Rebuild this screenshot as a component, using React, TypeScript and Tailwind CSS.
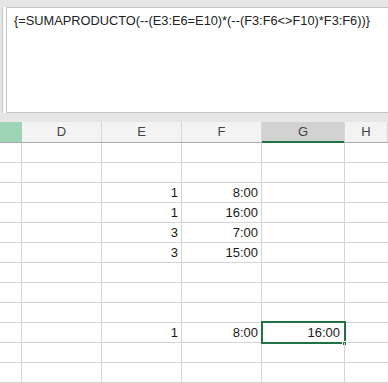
const cols = ["C", "D", "E", "F", "G", "H"];

type Row = { e?: string; f?: string; g?: string; sel?: boolean };

const rows: Row[] = [
  {},
  {},
  { e: "1", f: "8:00" },
  { e: "1", f: "16:00" },
  { e: "3", f: "7:00" },
  { e: "3", f: "15:00" },
  {},
  {},
  {},
  { e: "1", f: "8:00", g: "16:00", sel: true },
  {},
  {},
];

const grid = "grid grid-cols-[22px_80px_80px_80px_83px_1fr]";

export default function App() {
  return (
    <div className="h-[383px] w-[388px] overflow-hidden bg-white font-['Liberation_Sans',Arial,sans-serif] text-[#1a1a1a]">
      {/* formula bar */}
      <div className="flex h-[122px] bg-[#e6e6e6] pt-[7px] pb-[9px]">
        <div className="w-[3px] border-r border-[#c6c6c6] bg-[#e6e6e6]" />
        <div className="w-[3px] bg-white" />
        <div className="flex-1 border border-r-0 border-[#c6c6c6] bg-white pl-[7px] pt-[3px] text-[12.8px] leading-[20px] whitespace-nowrap text-[#222]">
          {"{=SUMAPRODUCTO(--(E3:E6=E10)*(--(F3:F6<>F10)*F3:F6))}"}
        </div>
      </div>

      {/* column headers */}
      <div className={`${grid} h-[21px] border-b border-[#ababab] bg-[#f3f3f3] text-[13px] text-[#444]`}>
        {cols.map((c) => (
          <div
            key={c}
            className={`flex items-center justify-center border-r ${
              c === "C"
                ? "border-[#9fd5b7] bg-[#9fd5b7]"
                : c === "G"
                ? "relative border-[#d8d8d8] bg-[#d2d2d2]"
                : "border-[#d8d8d8]"
            }`}
          >
            {c === "C" ? "" : c}
            {c === "G" && <div className="absolute -bottom-[1px] left-0 h-[2px] w-full bg-[#217346]" />}
          </div>
        ))}
      </div>

      {/* cells */}
      {rows.map((r, i) => (
        <div key={i} className={`${grid} h-[20px] border-b border-[#d4d4d4] text-[13px] leading-[19px]`}>
          <div className="border-r border-[#d4d4d4]" />
          <div className="border-r border-[#d4d4d4]" />
          <div className="border-r border-[#d4d4d4] pr-[3px] text-right">{r.e}</div>
          <div className="border-r border-[#d4d4d4] pr-[3px] text-right">{r.f}</div>
          <div className="relative border-r border-[#d4d4d4] pr-[4px] text-right">
            {r.g}
            {r.sel && (
              <>
                <div className="absolute -left-[1px] -top-[2px] h-[23px] w-[85px] border-2 border-[#217346]" />
                <div className="absolute -right-[3px] -bottom-[4px] h-[5px] w-[5px] border border-white bg-[#217346]" />
              </>
            )}
          </div>
          <div />
        </div>
      ))}
    </div>
  );
}
